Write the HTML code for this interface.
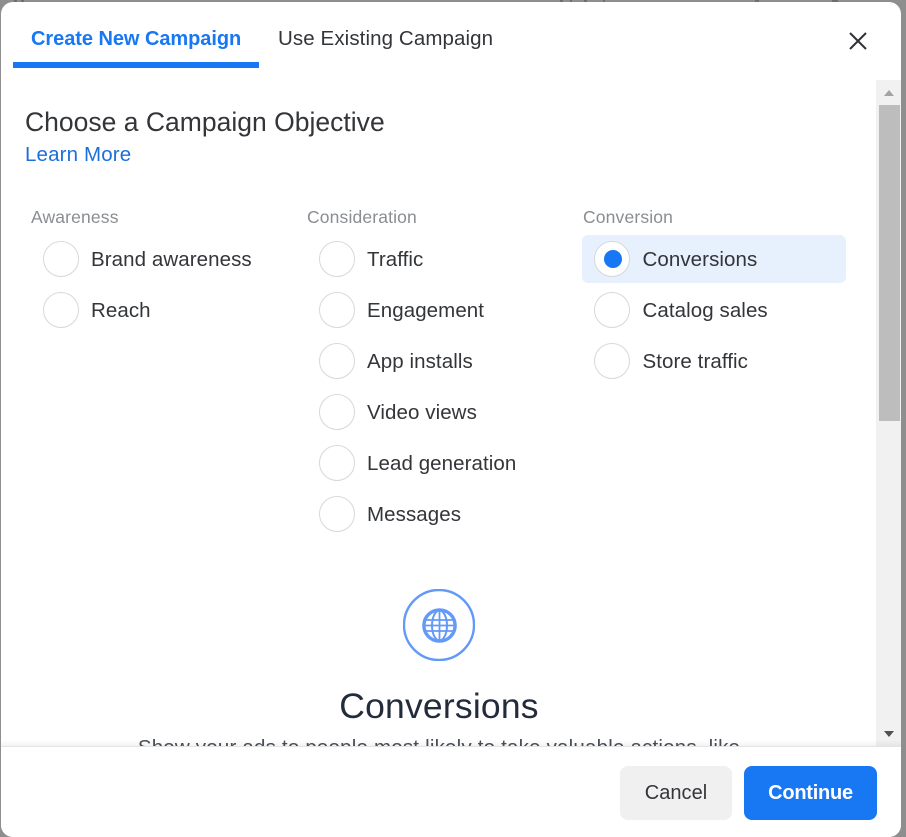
<!DOCTYPE html>
<html>
<head>
<meta charset="utf-8">
<style>
html,body{margin:0;padding:0;width:906px;height:837px;overflow:hidden;background:#8e8e8e;font-family:"Liberation Sans",sans-serif;}
.stage{position:relative;width:906px;height:837px;overflow:hidden;background:#8e8e8e;}
.modal{position:absolute;left:1px;top:2px;width:900px;height:835px;background:#fff;border-radius:12px;overflow:hidden;}
.t{position:absolute;white-space:nowrap;color:#333539;line-height:24px;}
.o{font-size:20.5px;letter-spacing:.08px;margin-top:1px;}
.l{font-size:17.5px;letter-spacing:.15px;color:#8a8d91;}
.r{position:absolute;width:34px;height:34px;border:1px solid #d6d8db;border-radius:50%;background:#fff;}
.bgs{position:absolute;height:2px;top:0;background:#6e6e6e}
</style>
</head>
<body>
<div class="stage">
<div class="bgs" style="left:14px;width:3px"></div>
<div class="bgs" style="left:21px;width:3px"></div>
<div class="bgs" style="left:560px;width:3px"></div>
<div class="bgs" style="left:570px;width:2px"></div>
<div class="bgs" style="left:584px;width:3px"></div>
<div class="bgs" style="left:603px;width:2px"></div>
<div class="bgs" style="left:755px;width:4px"></div>
<div class="bgs" style="left:832px;width:6px"></div>
<div class="modal">
<div style="position:absolute;left:12px;top:60px;width:246px;height:6px;background:#1877f2"></div>
<div class="t" style="left:30px;top:25px;font-size:20px;font-weight:700;color:#1877f2;letter-spacing:-.05px">Create New Campaign</div>
<div class="t" style="left:277px;top:24.5px;font-size:20.5px;letter-spacing:.1px">Use Existing Campaign</div>
<svg style="position:absolute;left:848px;top:30px" width="18" height="18" viewBox="0 0 18 18"><path d="M1 1L17 17M17 1L1 17" stroke="#2f3136" stroke-width="2" fill="none"/></svg>

<div class="t" style="left:24px;top:106px;font-size:26.5px;line-height:28px;letter-spacing:.01px">Choose a Campaign Objective</div>
<div class="t" style="left:24px;top:141px;font-size:20.5px;color:#1b6fdc;letter-spacing:.15px">Learn More</div>

<div class="t l" style="left:30px;top:202.5px">Awareness</div>
<div class="t l" style="left:306px;top:202.5px">Consideration</div>
<div class="t l" style="left:582px;top:202.5px">Conversion</div>

<div class="r" style="left:42px;top:239px"></div><div class="t o" style="left:90px;top:245px">Brand awareness</div>
<div class="r" style="left:42px;top:290px"></div><div class="t o" style="left:90px;top:296px">Reach</div>

<div class="r" style="left:318px;top:239px"></div><div class="t o" style="left:366px;top:245px">Traffic</div>
<div class="r" style="left:318px;top:290px"></div><div class="t o" style="left:366px;top:296px">Engagement</div>
<div class="r" style="left:318px;top:341px"></div><div class="t o" style="left:366px;top:347px">App installs</div>
<div class="r" style="left:318px;top:392px"></div><div class="t o" style="left:366px;top:398px">Video views</div>
<div class="r" style="left:318px;top:443px"></div><div class="t o" style="left:366px;top:449px">Lead generation</div>
<div class="r" style="left:318px;top:494px"></div><div class="t o" style="left:366px;top:500px">Messages</div>

<div style="position:absolute;left:581px;top:233px;width:264px;height:48px;background:#e7f1fd;border-radius:6px"></div>
<div class="r" style="left:593px;top:239px"></div>
<div style="position:absolute;left:602.5px;top:248px;width:18px;height:18px;border-radius:50%;background:#1877f2"></div>
<div class="t o" style="left:641.5px;top:245px">Conversions</div>
<div class="r" style="left:593px;top:290px"></div><div class="t o" style="left:641.5px;top:296px">Catalog sales</div>
<div class="r" style="left:593px;top:341px"></div><div class="t o" style="left:641.5px;top:347px">Store traffic</div>

<svg style="position:absolute;left:402px;top:587px" width="72" height="72" viewBox="0 0 72 72">
<circle cx="36" cy="36" r="35" fill="#fff" stroke="#6399f7" stroke-width="2.4"/>
<g fill="none" stroke="#6399f7">
<circle cx="36.5" cy="36.5" r="15.6" stroke-width="3.4"/>
<ellipse cx="36.5" cy="36.5" rx="7.5" ry="15" stroke-width="2"/>
<path d="M36.5 21V52M21 31H52M21 36.5H52M21 42H52" stroke-width="1.8"/>
</g>
</svg>
<div class="t" style="left:0;width:876px;text-align:center;top:684px;font-size:35.5px;line-height:40px;letter-spacing:.2px;color:#232c3a">Conversions</div>
<div class="t" style="left:0;width:876px;text-align:center;top:734px;font-size:20.5px;letter-spacing:.2px;color:#4b4f56">Show your ads to people most likely to take valuable actions, like</div>

<div style="position:absolute;left:875px;top:78px;width:25px;height:666px;background:#f1f1f1"></div>
<div style="position:absolute;left:878px;top:103px;width:21px;height:316px;background:#bdbdbd"></div>
<div style="position:absolute;left:882.5px;top:88px;width:0;height:0;border-left:5.5px solid transparent;border-right:5.5px solid transparent;border-bottom:6px solid #a3a3a3"></div>
<div style="position:absolute;left:882.5px;top:729px;width:0;height:0;border-left:5.5px solid transparent;border-right:5.5px solid transparent;border-top:6px solid #505050"></div>

<div style="position:absolute;left:0;top:738px;width:900px;height:6px;background:linear-gradient(rgba(0,0,0,0),rgba(0,0,0,.05))"></div>
<div style="position:absolute;left:0;top:744px;width:900px;height:92px;background:#fff;border-top:1px solid #e2e3e5"></div>
<div class="t" style="left:619px;top:764px;width:112px;height:54px;background:#f0f0f0;border-radius:8px;text-align:center;line-height:54px;font-size:20px;letter-spacing:.05px">Cancel</div>
<div class="t" style="left:743px;top:764px;width:133px;height:54px;background:#1877f2;border-radius:8px;text-align:center;line-height:54px;font-size:20px;font-weight:700;color:#fff;letter-spacing:-.25px">Continue</div>
</div>
</div>
</body>
</html>
